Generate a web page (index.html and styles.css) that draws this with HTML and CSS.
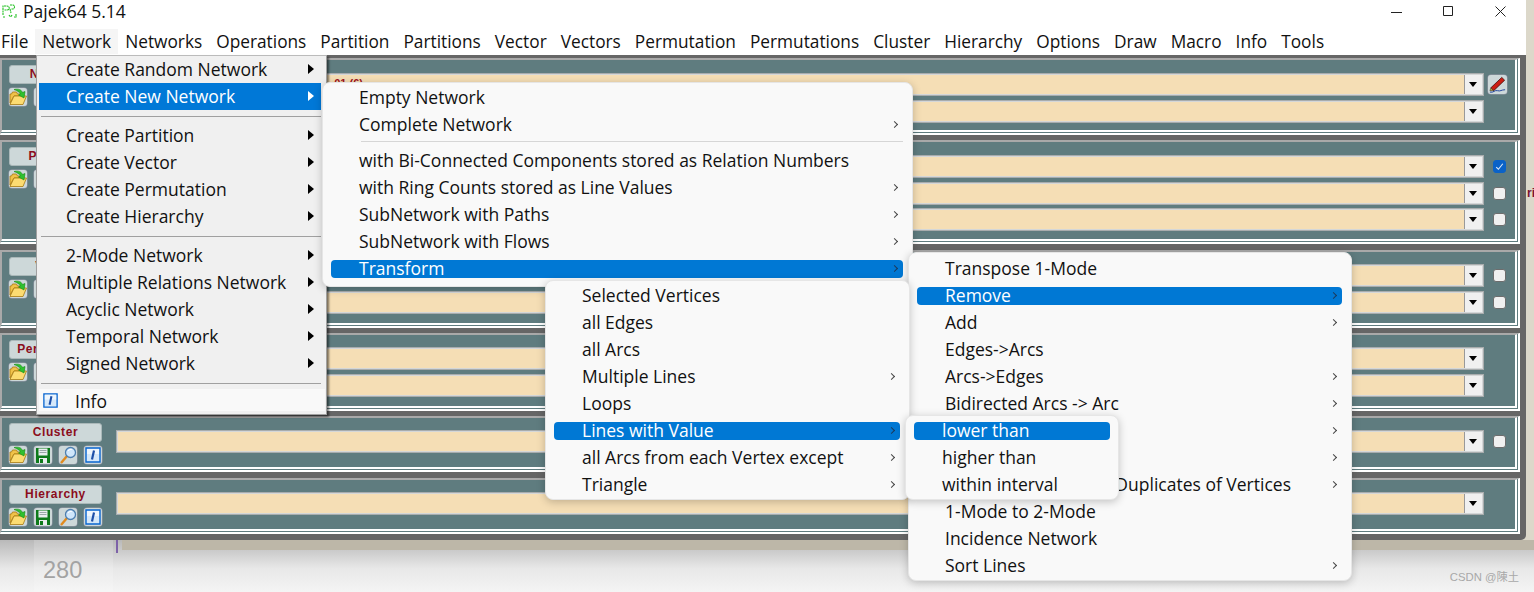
FILE: index.html
```html
<!DOCTYPE html>
<html lang="en">
<head>
<meta charset="utf-8">
<title>Pajek64 5.14</title>
<link rel="stylesheet" href="styles.css">
</head>
<body>
<svg class="defs" width="0" height="0" aria-hidden="true">
  <symbol id="i-open" viewBox="0 0 18 18">
    <path d="M1 15V6h1.500l1-2h4l1 2h4v2H5L1 15z" fill="#f0c24a" stroke="#a87a10" stroke-width=".8"/>
    <path d="M1 16.500l4-8.500h12.500l-3.500 8.500H1z" fill="#fcdc72" stroke="#a87a10" stroke-width=".8"/>
    <path d="M5 1.500c4-1 7.500 0 8.500 3l2.500-1-1 6.500-5.500-3 2-1C10.500 4 8 2.500 5 1.500z" fill="#2fc12f" stroke="#138a13" stroke-width=".6"/>
  </symbol>
  <symbol id="i-save" viewBox="0 0 18 18">
    <path d="M2 2h14v15H2z" fill="#0d7a1a"/>
    <path d="M4.500 2.500h9v7h-9z" fill="#e9eeee"/>
    <path d="M5.500 4.500h7M5.500 6.500h7" stroke="#9aa8a8" stroke-width="1"/>
    <path d="M5 12h8v5H5z" fill="#e9eeee"/>
    <path d="M6 13h3v4H6z" fill="#0d7a1a"/>
  </symbol>
  <symbol id="i-find" viewBox="0 0 18 18">
    <path d="M2 17l6-7" stroke="#e08a1e" stroke-width="2.400"/>
    <circle cx="11.500" cy="6.500" r="5" fill="#cfe6fb" stroke="#4d7fb0" stroke-width="1.300"/>
    <path d="M9 5c1-1.500 3-2 4-1.500" stroke="#fff" fill="none"/>
  </symbol>
  <symbol id="i-info" viewBox="0 0 18 18">
    <path d="M2 2h14v14H2z" fill="#d5e8fa" stroke="#0a66d0" stroke-width="1.400"/>
    <path d="M3 3h12v5H3z" fill="#eef6fd"/>
    <path d="M10 4.500l-2 9" stroke="#1d4fa8" stroke-width="2.200"/>
  </symbol>
  <symbol id="i-edit" viewBox="0 0 20 19">
    <path d="M3 13L14.500 2l3 3L6 16l-3-3z" fill="#cc1d12" stroke="#3a0a08" stroke-width=".8"/>
    <path d="M3 13l-1 3 4 0z" fill="#c8a030" stroke="#222" stroke-width=".5"/>
    <path d="M2 17.500c4 1 5-2.500 8-1.500s4-1 8-1" stroke="#1b3f9c" fill="none" stroke-width="1"/>
  </symbol>
</svg>

<div class="win">
  <header class="titlebar">
    <svg class="logo" viewBox="0 0 16 14" aria-hidden="true"><path d="M1 11V2h4c3 0 3 4 0 4H2m6-5h3c2 0 2 4 0 4H9M8 5l1 4M1 13h2m4-2c1 2 2 2 3 0m2 2h3m-1-3v3" fill="none" stroke="#1fc01f" stroke-width="1.100" stroke-dasharray="2 .5"/></svg>
    <span class="title-text">Pajek64 5.14</span>
    <div class="win-controls">
      <svg viewBox="0 0 11 11" aria-hidden="true"><path d="M0 6.500h11" stroke="#222" stroke-width="1"/></svg>
      <svg viewBox="0 0 11 11" aria-hidden="true"><path d="M.5.500h9v9h-9z" fill="none" stroke="#222" stroke-width="1"/></svg>
      <svg viewBox="0 0 11 11" aria-hidden="true"><path d="M.5.500l10 10M10.500.500l-10 10" stroke="#222" stroke-width="1"/></svg>
    </div>
  </header>
  <nav class="menubar">
    <span>File</span><span class="open">Network</span><span>Networks</span><span>Operations</span><span>Partition</span><span>Partitions</span><span>Vector</span><span>Vectors</span><span>Permutation</span><span>Permutations</span><span>Cluster</span><span>Hierarchy</span><span>Options</span><span>Draw</span><span>Macro</span><span>Info</span><span>Tools</span>
  </nav>

  <main class="frame">
    <section class="panel p-net">
      <div class="side">
        <div class="name">Network</div>
        <div class="tools"><i class="tb"><svg><use href="#i-open"/></svg></i><i class="tb"><svg><use href="#i-save"/></svg></i><i class="tb"><svg><use href="#i-find"/></svg></i><i class="tb"><svg><use href="#i-info"/></svg></i></div>
      </div>
      <div class="rows">
        <div class="row"><div class="combo"><span class="val">1. 01 (6)</span><b class="drop"></b></div><div class="extra"><i class="tb edit"><svg><use href="#i-edit"/></svg></i></div></div>
        <div class="row"><div class="combo"><b class="drop"></b></div><div class="extra"></div></div>
      </div>
    </section>
    <section class="panel p-par">
      <div class="side">
        <div class="name">Partition</div>
        <div class="tools"><i class="tb"><svg><use href="#i-open"/></svg></i><i class="tb"><svg><use href="#i-save"/></svg></i><i class="tb"><svg><use href="#i-find"/></svg></i><i class="tb"><svg><use href="#i-info"/></svg></i></div>
      </div>
      <div class="rows">
        <div class="row"><div class="combo"><b class="drop"></b></div><div class="extra"><i class="chk on"><svg viewBox="0 0 10 10" aria-hidden="true"><path d="M2 5.500l2 2 4-5" fill="none" stroke="#dce9fb" stroke-width="1"/></svg></i></div></div>
        <div class="row"><div class="combo"><b class="drop"></b></div><div class="extra"><i class="chk"></i></div></div>
        <div class="row"><div class="combo"><b class="drop"></b></div><div class="extra"><i class="chk"></i></div></div>
      </div>
    </section>
    <section class="panel p-vec">
      <div class="side">
        <div class="name">Vector</div>
        <div class="tools"><i class="tb"><svg><use href="#i-open"/></svg></i><i class="tb"><svg><use href="#i-save"/></svg></i><i class="tb"><svg><use href="#i-find"/></svg></i><i class="tb"><svg><use href="#i-info"/></svg></i></div>
      </div>
      <div class="rows">
        <div class="row"><div class="combo"><b class="drop"></b></div><div class="extra"><i class="chk"></i></div></div>
        <div class="row"><div class="combo"><b class="drop"></b></div><div class="extra"><i class="chk"></i></div></div>
      </div>
    </section>
    <section class="panel p-per">
      <div class="side">
        <div class="name">Permutation</div>
        <div class="tools"><i class="tb"><svg><use href="#i-open"/></svg></i><i class="tb"><svg><use href="#i-save"/></svg></i><i class="tb"><svg><use href="#i-find"/></svg></i><i class="tb"><svg><use href="#i-info"/></svg></i></div>
      </div>
      <div class="rows">
        <div class="row"><div class="combo"><b class="drop"></b></div><div class="extra"></div></div>
        <div class="row"><div class="combo"><b class="drop"></b></div><div class="extra"></div></div>
      </div>
    </section>
    <section class="panel p-clu">
      <div class="side">
        <div class="name">Cluster</div>
        <div class="tools"><i class="tb"><svg><use href="#i-open"/></svg></i><i class="tb"><svg><use href="#i-save"/></svg></i><i class="tb"><svg><use href="#i-find"/></svg></i><i class="tb"><svg><use href="#i-info"/></svg></i></div>
      </div>
      <div class="rows">
        <div class="row"><div class="combo"><b class="drop"></b></div><div class="extra"><i class="chk"></i></div></div>
      </div>
    </section>
    <section class="panel p-hie">
      <div class="side">
        <div class="name">Hierarchy</div>
        <div class="tools"><i class="tb"><svg><use href="#i-open"/></svg></i><i class="tb"><svg><use href="#i-save"/></svg></i><i class="tb"><svg><use href="#i-find"/></svg></i><i class="tb"><svg><use href="#i-info"/></svg></i></div>
      </div>
      <div class="rows">
        <div class="row"><div class="combo"><b class="drop"></b></div><div class="extra"></div></div>
      </div>
    </section>
  </main>
</div>

<div class="below">
  <div class="margin"></div>
  <div class="gutter"><span class="lineno">280</span></div>
  <div class="below-code"><i class="caret"></i><div class="shade"></div></div>
  <span class="mark">CSDN @陳土</span>
</div>
<span class="peek">ri</span>

<ul class="menu classic m1">
  <li>Create Random Network<b class="tri"></b></li>
  <li class="hi">Create New Network<b class="tri"></b></li>
  <li class="sep"></li>
  <li>Create Partition<b class="tri"></b></li>
  <li>Create Vector<b class="tri"></b></li>
  <li>Create Permutation<b class="tri"></b></li>
  <li>Create Hierarchy<b class="tri"></b></li>
  <li class="sep"></li>
  <li>2-Mode Network<b class="tri"></b></li>
  <li>Multiple Relations Network<b class="tri"></b></li>
  <li>Acyclic Network<b class="tri"></b></li>
  <li>Temporal Network<b class="tri"></b></li>
  <li>Signed Network<b class="tri"></b></li>
  <li class="sep"></li>
  <li class="info"><svg class="info-ic"><use href="#i-info"/></svg>Info</li>
</ul>

<ul class="menu modern m2">
  <li>Empty Network</li>
  <li>Complete Network<b class="chev"></b></li>
  <li class="sep"></li>
  <li>with Bi-Connected Components stored as Relation Numbers</li>
  <li>with Ring Counts stored as Line Values<b class="chev"></b></li>
  <li>SubNetwork with Paths<b class="chev"></b></li>
  <li>SubNetwork with Flows<b class="chev"></b></li>
  <li class="hi">Transform<b class="chev"></b></li>
</ul>

<ul class="menu modern m4">
  <li>Transpose 1-Mode</li>
  <li class="hi">Remove<b class="chev"></b></li>
  <li>Add<b class="chev"></b></li>
  <li>Edges-&gt;Arcs</li>
  <li>Arcs-&gt;Edges<b class="chev"></b></li>
  <li>Bidirected Arcs -&gt; Arc<b class="chev"></b></li>
  <li>Line Values<b class="chev"></b></li>
  <li>Vector Values<b class="chev"></b></li>
  <li>Remove Line among Duplicates of Vertices<b class="chev"></b></li>
  <li>1-Mode to 2-Mode</li>
  <li>Incidence Network</li>
  <li>Sort Lines<b class="chev"></b></li>
</ul>

<ul class="menu modern m3">
  <li>Selected Vertices</li>
  <li>all Edges</li>
  <li>all Arcs</li>
  <li>Multiple Lines<b class="chev"></b></li>
  <li>Loops</li>
  <li class="hi">Lines with Value<b class="chev"></b></li>
  <li>all Arcs from each Vertex except<b class="chev"></b></li>
  <li>Triangle<b class="chev"></b></li>
</ul>

<ul class="menu modern m5">
  <li class="hi">lower than</li>
  <li>higher than</li>
  <li>within interval</li>
</ul>
</body>
</html>
```
FILE: styles.css
```css
* { box-sizing: border-box; }
html, body { margin: 0; padding: 0; }
body {
  width: 1534px; height: 592px; overflow: hidden; position: relative;
  background: #dcd8ca;
  font-family: "Open Sans", "Noto Sans", sans-serif;
  color: #111;
}
.defs { position: absolute; }
.win { width: 1526px; display: flex; flex-direction: column; }
.titlebar { height: 28px; background: #fff; display: flex; align-items: center; padding: 0 0 6px 2px; }
.logo { width: 16px; height: 14px; margin-right: 5px; }
.title-text { font-size: 17.5px; line-height: 22px; }
.win-controls { margin-left: auto; display: flex; gap: 41px; padding-right: 20px; }
.win-controls svg { width: 11px; height: 11px; display: block; }
.menubar { height: 27px; background: #fff; display: flex; gap: 14px; font-size: 17.3px; line-height: 27px; padding-left: 1px; }
.menubar span { white-space: nowrap; }
.menubar .open { background: #f5f5f5; margin: 1px -7px; padding: 0 7px; line-height: 25px; }

.frame {
  height: 485px; background: #666; display: flex; flex-direction: column;
  padding: 3px 6px 0 0; border-radius: 0 0 5px 0;
}
.panel {
  display: flex; background: #5f7c7f; padding: 5px 8px 0 7px; flex: none;
  border-top: 2px solid #a9a9a9; border-left: 2px solid #a9a9a9;
  border-right: 5px double #fff; border-bottom: 5px double #fff;
}
.p-net { height: 77px; }
.p-par { height: 104px; margin-top: 5px; }
.p-vec { height: 78px; margin-top: 6px; }
.p-per { height: 78px; margin-top: 5px; }
.p-clu { height: 56px; margin-top: 5px; }
.p-hie { height: 56px; margin-top: 6px; }

.side { width: 93px; flex: none; display: flex; flex-direction: column; gap: 4px; }
.name {
  height: 19px; background: #cdd8d9; border-radius: 3px; border: 1px solid #aab8b9;
  color: #8b0d1c; font: bold 12px/17px "Liberation Sans", sans-serif; text-align: center; letter-spacing: .6px;
}
.tools { display: flex; gap: 7px; }
.tb {
  width: 18px; height: 18px; display: block; background: #cdd8d9; border-radius: 3px;
  box-shadow: 0 0 0 .5px #99a; flex: none;
}
.tb svg { width: 18px; height: 18px; display: block; }
.rows { flex: 1; padding: 7px 0 0 14px; display: flex; flex-direction: column; gap: 3.5px; }
.p-net .rows, .p-par .rows { padding-top: 8px; }
.row { display: flex; height: 23px; }
.combo {
  flex: 1; background: #f5deb5; border: 2px solid #d4d7d8; outline: 1px solid #a8acad; outline-offset: -1px;
  display: flex; justify-content: flex-end; position: relative;
}
.val { position: absolute; left: 204px; top: 1px; color: #a0121c; font: bold 11px/14px "Liberation Sans", sans-serif; }
.drop { width: 18px; background: #f0f0f0; border-left: 1px solid #999; position: relative; }
.drop::after {
  content: ""; position: absolute; left: 4px; top: 7px;
  border: 4px solid transparent; border-top: 5px solid #000; border-bottom: 0;
}
.extra { width: 23px; flex: none; display: flex; align-items: center; justify-content: flex-end; padding-right: 1px; }
.edit { width: 19px; height: 19px; margin-right: -1px; }
.edit svg { width: 19px; height: 19px; }
.chk { width: 13px; height: 13px; background: #f0f0f0; border: 1px solid #6d6d6d; border-radius: 3px; display: block; }
.chk.on { background: #0a62c8; border-color: #0a62c8; }
.chk.on svg { width: 11px; height: 11px; display: block; }

.below {
  height: 52px; background: linear-gradient(#b9b9b9, #e8e8e8 55%, #f4f4f4); position: relative; display: flex;
}
.margin { width: 34px; flex: none; }
.gutter { width: 79px; flex: none; padding-left: 9px; background: rgba(255,255,255,.16); }
.lineno { font: 23.5px/60px "Liberation Sans", sans-serif; color: #a3a3a3; }
.below-code { position: relative; flex: 1; }
.caret { position: absolute; left: 3px; top: 0; width: 2px; height: 13px; background: #7d62a8; }
.shade { position: absolute; left: 9px; top: 0; right: 0; height: 10px; background: #bdb7a8; }
.mark { position: absolute; right: 15px; top: 29px; font: 11.300px/16px "Liberation Sans", "Noto Sans CJK SC", sans-serif; color: #a8a8a8; }
.peek { position: absolute; left: 1527px; top: 186px; font: bold 12px/14px "Liberation Sans", sans-serif; color: #7a1030; width: 7px; overflow: hidden; }

.menu { position: absolute; margin: 0; list-style: none; font-size: 17.5px; padding: 0; color: #111; }
.menu li { height: 27px; line-height: 27px; white-space: nowrap; position: relative; }
.classic { left: 36px; top: 55px; width: 291px; height: 360px; background: #f0f0f0; border: 1px solid #a0a0a0; border-top-color: #bbb; box-shadow: 2px 2px 2px rgba(0,0,0,.5); padding: 0 5px 0 2px; }
.classic li { padding-left: 27px; }
.classic li.hi { background: #0078d7; color: #fff; }
.classic li.sep { height: 12px; }
.classic li.sep::before { content: ""; position: absolute; left: 2px; right: 0; top: 6px; height: 1px; background: #a0a0a0; }
.classic li.info { background: #f9f9f9; margin-right: -4px; height: 22px; line-height: 25px; padding-left: 36px; }
.info-ic { position: absolute; left: 3px; top: 3px; width: 17px; height: 17px; }
.tri { position: absolute; right: 7px; top: 8px; border: 5px solid transparent; border-left: 6px solid #000; border-right: 0; }
.hi .tri { border-left-color: #fff; }

.modern { background: #f9f9f9; border-radius: 8px; box-shadow: 0 2px 8px rgba(0,0,0,.22); border: 1px solid #e6e6e6; padding: 1px 9px 2px 8px; }
.modern li { padding-left: 28px; }
.modern li.hi { background: #0078d4; color: #fff; height: 18px; line-height: 17px; margin: 5px 0 4px; border-radius: 4px; }
.modern li.sep { height: 9px; }
.modern li.sep::before { content: ""; position: absolute; left: 30px; right: 0; top: 3px; height: 1px; background: #d6d6d6; }
.chev { position: absolute; right: 6px; top: 11px; width: 5px; height: 5px; border-top: 1px solid #444; border-right: 1px solid #444; transform: rotate(45deg); }
.hi .chev { top: 6px; border-color: #1c3a5c; }
.m2 { left: 322px; top: 82px; width: 591px; height: 205px; }
.m3 { left: 545px; top: 280px; width: 365px; height: 220px; }
.m4 { left: 908px; top: 252px; width: 444px; height: 329px; padding-top: 2px; }
.m5 { left: 905px; top: 415px; width: 214px; height: 85px; padding-right: 8px; }
```
